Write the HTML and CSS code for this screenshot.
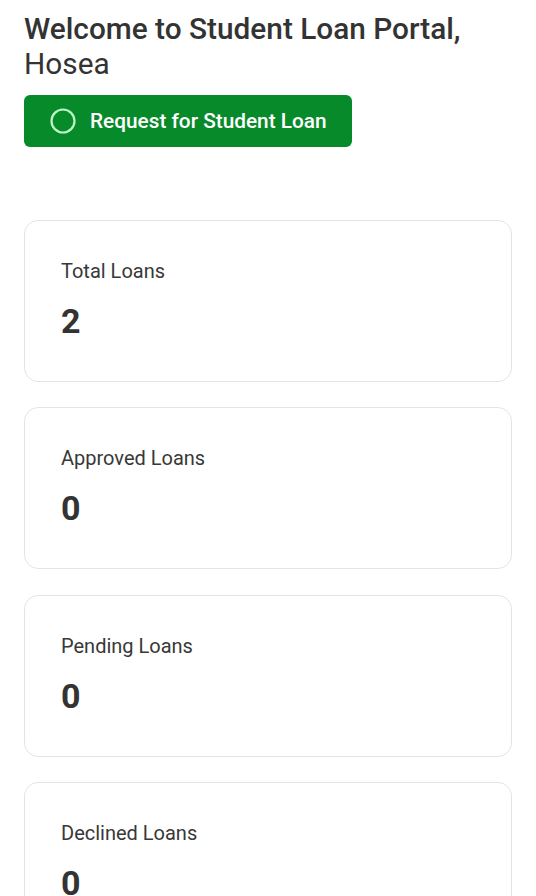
FILE: index.html
```html
<!DOCTYPE html>
<html>
<head>
<meta charset="utf-8">
<link rel="stylesheet" href="styles.css">
</head>
<body>
<main class="page">
  <h1 class="welcome"><span class="welcome-strong">Welcome to Student Loan Portal,</span><br><span class="welcome-name">Hosea</span></h1>
  <button class="request-btn">
    <svg class="request-icon" width="28" height="28" viewBox="0 0 28 28"><circle cx="14" cy="14" r="11.5" fill="none" stroke="#bff5c6" stroke-width="2.2"/></svg>
    <span>Request for Student Loan</span>
  </button>
  <section class="stats">
    <div class="card"><div class="card-label">Total Loans</div><div class="card-value">2</div></div>
    <div class="card"><div class="card-label">Approved Loans</div><div class="card-value">0</div></div>
    <div class="card"><div class="card-label">Pending Loans</div><div class="card-value">0</div></div>
    <div class="card"><div class="card-label">Declined Loans</div><div class="card-value">0</div></div>
  </section>
</main>
</body>
</html>
```
FILE: styles.css
```css
html, body {
  margin: 0;
  padding: 0;
  background: #ffffff;
}
body {
  font-family: Roboto, "Liberation Sans", sans-serif;
  color: #333333;
}
.page {
  padding: 11px 24px 0 24px;
}
.welcome {
  margin: 0;
  font-size: 29.8px;
  line-height: 35px;
  font-weight: 400;
  color: #333333;
}
.welcome-strong {
  font-weight: 500;
}
.request-btn {
  margin-top: 14px;
  display: flex;
  align-items: center;
  gap: 13px;
  height: 52px;
  width: 328px;
  padding: 0 0 0 25px;
  border: none;
  border-radius: 6px;
  background: #078a29;
  color: #ffffff;
  font-family: Roboto, "Liberation Sans", sans-serif;
  font-size: 20.8px;
  font-weight: 500;
  box-sizing: border-box;
}
.request-icon {
  flex: none;
}
.stats {
  margin-top: 73px;
  display: flex;
  flex-direction: column;
  gap: 25.3px;
}
.card {
  border: 1.5px solid #e4e4e4;
  border-radius: 14px;
  height: 162px;
  box-sizing: border-box;
  padding: 38px 36px 0 36px;
}
.card-label {
  font-size: 20px;
  line-height: 24px;
  color: #383838;
}
.card-value {
  margin-top: 18px;
  font-size: 34px;
  line-height: 40px;
  font-weight: 700;
  color: #333333;
}
```
